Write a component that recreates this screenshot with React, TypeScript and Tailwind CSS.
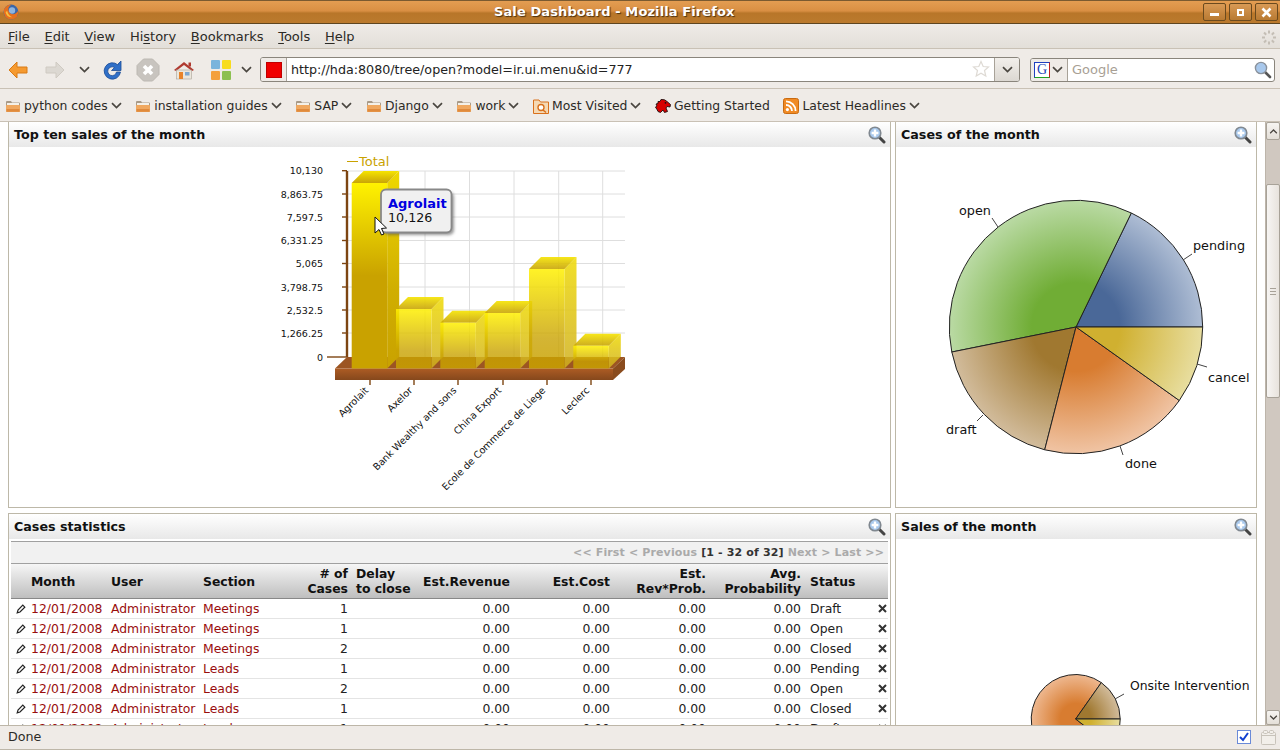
import React from "react";

const rows = [
  ["Meetings", "1", "Draft"],
  ["Meetings", "1", "Open"],
  ["Meetings", "2", "Closed"],
  ["Leads", "1", "Pending"],
  ["Leads", "2", "Open"],
  ["Leads", "1", "Closed"],
  ["Leads", "1", "Draft"],
];

const bookmarks = [
  { label: "python codes", icon: "folder", menu: true },
  { label: "installation guides", icon: "folder", menu: true },
  { label: "SAP", icon: "folder", menu: true },
  { label: "Django", icon: "folder", menu: true },
  { label: "work", icon: "folder", menu: true },
  { label: "Most Visited", icon: "visited", menu: true },
  { label: "Getting Started", icon: "moz", menu: false },
  { label: "Latest Headlines", icon: "rss", menu: true },
];

function Chevron({ className = "" }: { className?: string }) {
  return (
    <svg width="11" height="7" viewBox="0 0 11 7" className={className}>
      <path d="M1 1.2 L5.5 5.5 L10 1.2" fill="none" stroke="#4a4640" strokeWidth="1.7" />
    </svg>
  );
}

function FolderIcon() {
  return (
    <svg width="16" height="14" viewBox="0 0 16 14">
      <path d="M1 3 Q1 2 2 2 H6 L7 3.5 H14 Q15 3.5 15 4.5 V12 Q15 13 14 13 H2 Q1 13 1 12 Z" fill="#a89a88" />
      <rect x="2" y="4" width="12" height="3" fill="#f4f0e8" />
      <path d="M1 7 Q1 6 2 6 H14 Q15 6 15 7 V12 Q15 13 14 13 H2 Q1 13 1 12 Z" fill="#f0a860" />
      <path d="M1.5 10 H14.5 V12 Q14.5 12.7 14 12.7 H2 Q1.5 12.7 1.5 12 Z" fill="#e08a3c" />
    </svg>
  );
}

function BookmarkIcon({ type }: { type: string }) {
  if (type === "folder") return <FolderIcon />;
  if (type === "visited")
    return (
      <svg width="16" height="16" viewBox="0 0 16 16">
        <path d="M0.5 2 H6 L7.5 4 H15.5 V15.5 H0.5 Z" fill="#f5d9b4" stroke="#d9701c" />
        <circle cx="8" cy="9.5" r="3" fill="#fff" stroke="#d9701c" strokeWidth="1.4" />
        <path d="M10 12 L13 14.5" stroke="#d9701c" strokeWidth="1.6" />
      </svg>
    );
  if (type === "moz")
    return (
      <svg width="16" height="16" viewBox="0 0 16 16">
        <path d="M0.5 9 L2 8 L1 6 L3 5.5 L3 3.5 L5 3.5 L6 1.5 Q10 1 12 3.5 L15.5 6.5 L15 9 L12 8.5 L11 10 L12.5 13.5 L9.5 14.5 L8 12 L5.5 14.5 L3 13.5 L2 11.5 Z" fill="#d80000" stroke="#201010" strokeWidth="0.9" />
        <circle cx="10.5" cy="4.8" r="0.9" fill="#111" />
      </svg>
    );
  return (
    <svg width="16" height="16" viewBox="0 0 16 16">
      <rect x="0.5" y="0.5" width="15" height="15" rx="2" fill="#f08a24" stroke="#c96a10" />
      <circle cx="4.4" cy="11.6" r="1.6" fill="#fff" />
      <path d="M3 7 A6 6 0 0 1 9 13" fill="none" stroke="#fff" strokeWidth="1.8" />
      <path d="M3 3.4 A9.6 9.6 0 0 1 12.6 13" fill="none" stroke="#fff" strokeWidth="1.8" />
    </svg>
  );
}

function ZoomIcon() {
  return (
    <svg width="18" height="18" viewBox="0 0 18 18">
      <path d="M11 11 L16 16" stroke="#444" strokeWidth="3" strokeLinecap="round" />
      <circle cx="7" cy="7" r="5.8" fill="#a8c8ec" stroke="#808890" strokeWidth="1.6" />
      <path d="M7 3.6 V10.4 M3.6 7 H10.4" stroke="#fff" strokeWidth="2.4" />
    </svg>
  );
}

function WindowButton({ kind }: { kind: "min" | "max" | "close" }) {
  return (
    <div className="w-[23px] h-[18px] rounded-[2px] border border-[#6b4a1e] bg-gradient-to-b from-[#d99a55] to-[#b87a32] flex items-center justify-center">
      {kind === "min" && <div className="w-[9px] h-[3px] mt-[5px] bg-white" />}
      {kind === "max" && <div className="w-[7px] h-[7px] border-2 border-white" />}
      {kind === "close" && (
        <svg width="11" height="11" viewBox="0 0 11 11">
          <path d="M1.5 1.5 L9.5 9.5 M9.5 1.5 L1.5 9.5" stroke="#fff" strokeWidth="2.6" />
        </svg>
      )}
    </div>
  );
}

function TitleBar() {
  return (
    <div className="h-[24px] shrink-0 relative flex items-center justify-between border-t border-b border-t-[#7a5a30] border-b-[#5e4520] bg-[linear-gradient(#e39d52_0%,#d98f43_45%,#b87629_55%,#bb7a2e_100%)]">
      <svg width="16" height="16" viewBox="0 0 16 16" className="ml-[3px]">
        <circle cx="8" cy="8" r="7.4" fill="#3a66a8" />
        <circle cx="9" cy="6.5" r="3.2" fill="#8fb4de" />
        <path d="M0.8 6 Q3 0.6 8.5 0.8 Q5 2.6 5.4 6 Q6 10 10 10.3 Q13 10.3 15.3 6.5 Q15.6 15.4 8 15.4 Q0.6 15.4 0.8 6 Z" fill="#e8701c" />
        <path d="M2.6 8 Q3.6 13.4 9.4 13.2 Q5 11.4 4.2 7 Z" fill="#f8c040" />
      </svg>
      <span className="absolute left-[494px] top-[1px] text-[13px] font-bold tracking-[0.1px] text-white [text-shadow:1px_1px_1px_#4a3010]">
        Sale Dashboard - Mozilla Firefox
      </span>
      <div className="flex gap-[3px] mr-[2px]">
        <WindowButton kind="min" />
        <WindowButton kind="max" />
        <WindowButton kind="close" />
      </div>
    </div>
  );
}

function MenuBar() {
  const items: [string, string, string][] = [
    ["", "F", "ile"],
    ["", "E", "dit"],
    ["", "V", "iew"],
    ["Hi", "s", "tory"],
    ["", "B", "ookmarks"],
    ["", "T", "ools"],
    ["", "H", "elp"],
  ];
  return (
    <div className="h-[25px] shrink-0 flex items-center justify-between pl-[8px] pr-[4px] pt-[2px] bg-gradient-to-b from-[#efebe7] to-[#e3dfd9] border-b border-[#c9c1b5] text-[13px] text-[#2c2a26]">
      <div className="flex gap-[14.7px]">
        {items.map(([a, u, b]) => (
          <span key={a + u + b}>
            {a}
            <span className="underline underline-offset-2">{u}</span>
            {b}
          </span>
        ))}
      </div>
      <svg width="14" height="15" viewBox="0 0 14 15">
        {[0, 45, 90, 135, 180, 225, 270, 315].map((a) => (
          <rect key={a} x="6" y="0.5" width="2" height="3" fill="#c4beb5" transform={`rotate(${a} 7 7.5)`} />
        ))}
      </svg>
    </div>
  );
}

function NavBar() {
  return (
    <div className="h-[40px] shrink-0 flex items-center pt-[2px] bg-[#efebe7] border-b border-[#c9c1b5] relative">
      <svg width="20" height="18" viewBox="0 0 20 18" className="ml-[8px]">
        <path d="M9 1 L1 9 L9 17 V12 H19 V6 H9 Z" fill="#f59a30" stroke="#d97a14" strokeLinejoin="round" />
      </svg>
      <svg width="20" height="18" viewBox="0 0 20 18" className="ml-[17px]">
        <path d="M11 1 L19 9 L11 17 V12 H1 V6 H11 Z" fill="#dcd8d2" stroke="#cfcac2" strokeLinejoin="round" />
      </svg>
      <Chevron className="ml-[14px]" />
      <svg width="22" height="24" viewBox="0 0 22 24" className="ml-[11px]">
        <path d="M17 7 A8.2 8.2 0 1 0 19.5 14 H15.5 A4.4 4.4 0 1 1 13.5 9.5 L10.5 12.5 H20 V3 L17 6 Z" fill="#2f6fc8" stroke="#1d4c96" strokeWidth="0.8" />
      </svg>
      <svg width="24" height="24" viewBox="0 0 24 24" className="ml-[13px]">
        <path d="M7.5 1 H16.5 L23 7.5 V16.5 L16.5 23 H7.5 L1 16.5 V7.5 Z" fill="#c8c4bf" stroke="#bcb8b2" />
        <path d="M8 8 L16 16 M16 8 L8 16" stroke="#fff" strokeWidth="3.6" />
      </svg>
      <svg width="22" height="20" viewBox="0 0 22 20" className="ml-[13px]">
        <path d="M1 10 L11 2 L21 10 L19 11 L11 5 L3 11 Z" fill="#b03a30" />
        <rect x="15.5" y="2.5" width="2.5" height="4" fill="#b03a30" />
        <rect x="3.5" y="10" width="15" height="9" fill="#ebe6dc" stroke="#a8a298" strokeWidth="0.6" />
        <rect x="6" y="12" width="4" height="7" fill="#e8832a" />
        <rect x="12" y="12" width="4.5" height="3.5" fill="#7fa8d0" />
      </svg>
      <div className="ml-[16px] grid grid-cols-2 gap-[2px]">
        <div className="w-[9px] h-[9px] rounded-[1px] bg-[#7ab4dc]" />
        <div className="w-[9px] h-[9px] rounded-[1px] bg-[#f8dc1c]" />
        <div className="w-[9px] h-[9px] rounded-[1px] bg-[#f4a03c]" />
        <div className="w-[9px] h-[9px] rounded-[1px] bg-[#8cc050]" />
      </div>
      <Chevron className="ml-[10px]" />
      <div className="ml-[8px] w-[760px] h-[25px] flex rounded-[3px] border border-[#8a857c] bg-white overflow-hidden">
        <div className="w-[26px] flex items-center justify-center bg-[#efebe7] border-r border-[#a8a298]">
          <div className="w-[16px] h-[16px] bg-[#f00000] border border-[#c00000]" />
        </div>
        <span className="pl-[4px] flex-1 text-[12.7px] leading-[23px] text-[#222]">
          http://hda:8080/tree/open?model=ir.ui.menu&amp;id=777
        </span>
        <svg width="18" height="18" viewBox="0 0 18 18" className="mt-[2px] mr-[4px]">
          <path d="M9 1.5 L11.2 6.5 L16.5 7 L12.5 10.5 L13.8 16 L9 13.2 L4.2 16 L5.5 10.5 L1.5 7 L6.8 6.5 Z" fill="#fff" stroke="#dedad4" strokeWidth="1.2" />
        </svg>
        <div className="w-[25px] flex items-center justify-center bg-gradient-to-b from-[#f2efeb] to-[#dcd8d2] border-l border-[#a8a298]">
          <Chevron />
        </div>
      </div>
      <div className="ml-[10px] w-[245px] h-[24px] flex items-center rounded-[3px] border border-[#8a857c] bg-white overflow-hidden">
        <div className="w-[37px] h-full flex items-center bg-[#efebe7] border-r border-[#a8a298] pl-[3px] gap-[2px]">
          <div className="w-[16px] h-[16px] flex items-center justify-center border-t border-l border-t-[#2040c0] border-l-[#2040c0] border-r border-b border-r-[#c02020] border-b-[#20a020] bg-white text-[14px] leading-none text-[#1c3fb8] font-['Liberation_Serif',serif]">
            G
          </div>
          <Chevron />
        </div>
        <span className="pl-[4px] flex-1 text-[13px] text-[#a89f94]">Google</span>
        <svg width="18" height="18" viewBox="0 0 18 18" className="mr-[2px]">
          <path d="M11 11 L16 16" stroke="#555" strokeWidth="2.6" strokeLinecap="round" />
          <circle cx="7" cy="7" r="5.6" fill="#a8c8ec" stroke="#8a929c" strokeWidth="1.4" />
        </svg>
      </div>
    </div>
  );
}

function BookmarksBar() {
  return (
    <div className="h-[33px] shrink-0 flex items-center pl-[5px] pt-[2px] gap-[13.6px] bg-[#efebe7] border-b border-[#c9c1b5] text-[12.4px] text-[#2c2a26]">
      {bookmarks.map((b) => (
        <div key={b.label} className="flex items-center">
          <BookmarkIcon type={b.icon} />
          <span className="ml-[3px]">{b.label}</span>
          {b.menu && <Chevron className="ml-[3px]" />}
        </div>
      ))}
    </div>
  );
}

function PanelHeader({ title }: { title: string }) {
  return (
    <div className="h-[25px] flex items-center justify-between pl-[5px] pr-[4px] bg-gradient-to-b from-white to-[#e8e8e8]">
      <span className="pt-[1px] text-[12.7px] font-bold text-[#111]">{title}</span>
      <ZoomIcon />
    </div>
  );
}

const ticks = [
  ["10,130", 170.7],
  ["8,863.75", 194],
  ["7,597.5", 217],
  ["6,331.25", 240.5],
  ["5,065", 263.5],
  ["3,798.75", 287],
  ["2,532.5", 310],
  ["1,266.25", 333],
] as const;

const bars = [
  { x: 351.7, top: 183, solid: true },
  { x: 396, top: 309, solid: false },
  { x: 440.3, top: 322.7, solid: false },
  { x: 484.7, top: 313, solid: false },
  { x: 529, top: 269, solid: false },
  { x: 573.3, top: 345.7, solid: false },
];

const xLabels: [string, number][] = [
  ["Agrolait", 370],
  ["Axelor", 414],
  ["Bank Wealthy and sons", 458],
  ["China Export", 503],
  ["Ecole de Commerce de Liege", 547],
  ["Leclerc", 591],
];

function BarChart() {
  return (
    <svg width="881" height="360" viewBox="9 147 881 360" className="block">
      <defs>
        <linearGradient id="solidFront" x1="0" y1="0" x2="0" y2="1">
          <stop offset="0" stopColor="#fff200" />
          <stop offset="0.5" stopColor="#c9a200" />
          <stop offset="1" stopColor="#c9a200" />
        </linearGradient>
        <linearGradient id="solidSide" x1="0" y1="0" x2="0" y2="1">
          <stop offset="0" stopColor="#efd800" />
          <stop offset="0.6" stopColor="#d0ae00" />
          <stop offset="1" stopColor="#c9a200" />
        </linearGradient>
        <linearGradient id="softFront" x1="0" y1="0" x2="0" y2="1">
          <stop offset="0" stopColor="#fff000" stopOpacity="0.85" />
          <stop offset="0.7" stopColor="#c9a200" stopOpacity="0.8" />
          <stop offset="1" stopColor="#c9a200" stopOpacity="0.85" />
        </linearGradient>
        <linearGradient id="softSide" x1="0" y1="0" x2="0" y2="1">
          <stop offset="0" stopColor="#f0dc10" stopOpacity="0.9" />
          <stop offset="1" stopColor="#d0b020" stopOpacity="0.85" />
        </linearGradient>
        <linearGradient id="barTop" x1="0" y1="0" x2="0" y2="1">
          <stop offset="0" stopColor="#f6e400" />
          <stop offset="1" stopColor="#c8a408" />
        </linearGradient>
        <linearGradient id="plinth" x1="0" y1="0" x2="0" y2="1">
          <stop offset="0" stopColor="#ad5c24" />
          <stop offset="1" stopColor="#85481c" />
        </linearGradient>
      </defs>

      {[171, 194, 217, 240.5, 263.5, 287, 310, 333].map((y) => (
        <line key={y} x1="347" x2="625" y1={y} y2={y} stroke="#dedede" />
      ))}
      {[425, 469.5, 514, 558.7, 602.7].map((x) => (
        <line key={x} x1={x} x2={x} y1="171" y2="357" stroke="#dedede" />
      ))}

      <path d="M347 171 V357" stroke="#7d4512" strokeWidth="2.4" />
      {ticks.map(([, y]) => (
        <line key={y} x1="342" x2="347" y1={y} y2={y} stroke="#7d4512" strokeWidth="1.4" />
      ))}
      <line x1="327" x2="347" y1="357" y2="357" stroke="#7d4512" strokeWidth="1.4" />
      {ticks.map(([label, y]) => (
        <text key={label} x="323" y={y + 3.5} textAnchor="end" fontSize="9.5" fill="#111">
          {label}
        </text>
      ))}
      <text x="323" y="360.5" textAnchor="end" fontSize="9.5" fill="#111">
        0
      </text>

      <path d="M335 368.5 L347 357 H625 L613 368.5 Z" fill="#9c5522" />
      <rect x="335" y="368.5" width="278" height="11.5" fill="url(#plinth)" />
      <path d="M613 368.5 L625 357 V369 L613 380 Z" fill="#8a4c1e" />

      {bars.map((b) => (
        <g key={b.x}>
          <path
            d={`M${b.x + 35.5} ${b.top} l12 -12 V356.5 l-12 12 Z`}
            fill={b.solid ? "url(#solidSide)" : "url(#softSide)"}
          />
          <path d={`M${b.x} ${b.top} l12 -12 h35.5 l-12 12 Z`} fill="url(#barTop)" fillOpacity={b.solid ? 1 : 0.9} />
          <rect x={b.x} y={b.top} width="35.5" height={368.5 - b.top} fill={b.solid ? "url(#solidFront)" : "url(#softFront)"} />
        </g>
      ))}

      {xLabels.map(([label, x]) => (
        <g key={label}>
          <line x1={x} x2={x} y1="380" y2="385" stroke="#7d4512" strokeWidth="1.4" />
          <text x={x - 1} y="391" textAnchor="end" fontSize="9.7" fill="#111" transform={`rotate(-45 ${x - 1} 391)`}>
            {label}
          </text>
        </g>
      ))}

      <line x1="347" x2="358" y1="161.5" y2="161.5" stroke="#c9a200" />
      <text x="359" y="166" fontSize="13" fill="#c9a200">
        Total
      </text>

      <rect x="384" y="192" width="70" height="43" rx="5" fill="#555" opacity="0.6" className="blur-[1.5px]" />
      <rect x="381" y="189.5" width="70.5" height="43" rx="5" fill="#f0f0f0" stroke="#888" strokeWidth="1.8" />
      <text x="388" y="208" fontSize="13" fontWeight="bold" fill="#0000e0">
        Agrolait
      </text>
      <text x="388" y="222" fontSize="12.7" fill="#111">
        10,126
      </text>
      <path d="M375 217 V233 L379 229.5 L381.5 235 L384 234 L381.5 228.5 L386.5 228 Z" fill="#fff" stroke="#111" strokeWidth="1" />
    </svg>
  );
}

type Slice = { id: string; d: string; dark: string; light: string };

function pieSlices(cx: number, cy: number, r: number, slices: { id: string; from: [number, number]; to: [number, number]; dark: string; light: string; large?: boolean }[]): Slice[] {
  return slices.map((s) => ({
    id: s.id,
    dark: s.dark,
    light: s.light,
    d: `M${cx} ${cy} L${s.from[0]} ${s.from[1]} A${r} ${r} 0 ${s.large ? 1 : 0} 0 ${s.to[0]} ${s.to[1]} Z`,
  }));
}

function Pie({ cx, cy, r, slices }: { cx: number; cy: number; r: number; slices: Slice[] }) {
  return (
    <g>
      <defs>
        {slices.map((s) => (
          <radialGradient key={s.id} id={s.id} gradientUnits="userSpaceOnUse" cx={cx} cy={cy} r={r}>
            <stop offset="0" stopColor={s.dark} />
            <stop offset="0.35" stopColor={s.dark} />
            <stop offset="1" stopColor={s.light} />
          </radialGradient>
        ))}
      </defs>
      {slices.map((s) => (
        <path key={s.id} d={s.d} fill={`url(#${s.id})`} stroke="#222" strokeWidth="1" strokeLinejoin="round" />
      ))}
    </g>
  );
}

function CasesPie() {
  const slices = pieSlices(1076, 327, 126.7, [
    { id: "pPending", from: [1202.7, 327], to: [1131.3, 213], dark: "#4a6898", light: "#aebdd4" },
    { id: "pOpen", from: [1131.3, 213], to: [951.8, 352], dark: "#70ad35", light: "#badaa4" },
    { id: "pDraft", from: [951.8, 352], to: [1044.7, 449.8], dark: "#a07830", light: "#d2bc9c" },
    { id: "pDone", from: [1044.7, 449.8], to: [1179.3, 400.5], dark: "#d87c30", light: "#f0c4a4" },
    { id: "pCancel", from: [1179.3, 400.5], to: [1202.7, 327], dark: "#d0b030", light: "#e8dea0" },
  ]);
  return (
    <svg width="360" height="360" viewBox="896 147 360 360" className="block">
      <Pie cx={1076} cy={327} r={126.7} slices={slices} />
      <g stroke="#444" fill="none">
        <path d="M992 218 L998 227" />
        <path d="M1192 254 L1183 260" />
        <path d="M1197 364 L1207 367" />
        <path d="M1120 446 L1123 455" />
        <path d="M983 415 L977 421" />
      </g>
      <g fontSize="12.8" fill="#111">
        <text x="959" y="215">open</text>
        <text x="1193" y="250">pending</text>
        <text x="1208" y="382">cancel</text>
        <text x="1125" y="468">done</text>
        <text x="946" y="434">draft</text>
      </g>
    </svg>
  );
}

function SalesPie() {
  const slices = pieSlices(1075.7, 719, 44.5, [
    { id: "sOrange", from: [1101.3, 682.6], to: [1110.8, 746.4], dark: "#d87c30", light: "#eeb890", large: true },
    { id: "sTan", from: [1120.2, 719], to: [1101.3, 682.6], dark: "#a07830", light: "#d2bc9c" },
    { id: "sYellow", from: [1110.8, 746.4], to: [1120.2, 719], dark: "#d0b030", light: "#e8dea0" },
  ]);
  return (
    <svg width="360" height="240" viewBox="896 539 360 240" className="block">
      <Pie cx={1075.7} cy={719} r={44.5} slices={slices} />
      <path d="M1115 699 L1124 694" stroke="#444" />
      <text x="1130" y="690" fontSize="12.4" fill="#111">
        Onsite Intervention
      </text>
    </svg>
  );
}

function CasesTable() {
  return (
    <div className="mx-[2px] mt-[2px] border-t border-[#a0a0a0]">
      <div className="h-[22px] flex items-center justify-end pr-[4px] pt-[2px] bg-[#f1f1f1] text-[11px] font-bold tracking-[0.14px] text-[#aaa] border-b border-[#a0a0a0]">
        &lt;&lt; First &lt; Previous&nbsp;<span className="text-[#333]">[1 - 32 of 32]</span>&nbsp;Next &gt; Last &gt;&gt;
      </div>
      <table className="w-[877px] table-fixed border-separate border-spacing-0 text-[12.4px] leading-[15px]">
        <colgroup>
          <col className="w-[20px]" />
          <col className="w-[80px]" />
          <col className="w-[92px]" />
          <col className="w-[90px]" />
          <col className="w-[59px]" />
          <col className="w-[62px]" />
          <col className="w-[100px]" />
          <col className="w-[100px]" />
          <col className="w-[96px]" />
          <col className="w-[96px]" />
          <col className="w-[70px]" />
          <col className="w-[12px]" />
        </colgroup>
        <thead>
          <tr className="h-[35px] bg-gradient-to-b from-[#f6f6f6] to-[#bdbdbd] text-[#111] [&>th]:border-b [&>th]:border-[#888] [&>th]:font-bold">
            <th />
            <th className="text-left">Month</th>
            <th className="text-left">User</th>
            <th className="text-left">Section</th>
            <th className="text-right pr-[4px]">
              # of<br />Cases
            </th>
            <th className="text-left pl-[4px]">
              Delay<br />to close
            </th>
            <th className="text-right pr-[4px]">Est.Revenue</th>
            <th className="text-right pr-[4px]">Est.Cost</th>
            <th className="text-right pr-[4px]">
              Est.<br />Rev*Prob.
            </th>
            <th className="text-right pr-[5px]">
              Avg.<br />Probability
            </th>
            <th className="text-left pl-[4px]">Status</th>
            <th />
          </tr>
        </thead>
        <tbody>
          {rows.map(([section, count, status], i) => (
            <tr key={i} className="h-[20px] text-[#222] [&>td]:border-b [&>td]:border-[#e4e4e4]">
              <td className="pl-[5px]">
                <svg width="10" height="10" viewBox="0 0 10 10" className="block">
                  <path d="M1.2 8.8 L2 6 L6.8 1.2 L8.8 3.2 L4 8 Z" fill="#fff" stroke="#222" strokeWidth="1.2" />
                </svg>
              </td>
              <td className="text-[#990d0d]">12/01/2008</td>
              <td className="text-[#990d0d]">Administrator</td>
              <td className="text-[#990d0d]">{section}</td>
              <td className="text-right pr-[4px]">{count}</td>
              <td />
              <td className="text-right pr-[4px]">0.00</td>
              <td className="text-right pr-[4px]">0.00</td>
              <td className="text-right pr-[4px]">0.00</td>
              <td className="text-right pr-[5px]">0.00</td>
              <td className="pl-[4px]">{status}</td>
              <td className="pl-[2px]">
                <svg width="9" height="9" viewBox="0 0 9 9" className="block">
                  <path d="M1 1 L8 8 M8 1 L1 8" stroke="#333" strokeWidth="2" />
                </svg>
              </td>
            </tr>
          ))}
        </tbody>
      </table>
    </div>
  );
}

function Scrollbar() {
  return (
    <div className="w-[15px] shrink-0 ml-[8px] flex flex-col bg-[#d0c8c0] border-l border-[#bdb5aa]">
      <div className="h-[18px] flex items-center justify-center rounded-[2px] border border-[#a8a298] bg-gradient-to-b from-[#f6f4f1] to-[#e4dfd8]">
        <Chevron className="rotate-180 scale-75" />
      </div>
      <div className="mt-[44px] h-[214px] flex items-center justify-center rounded-[2px] border border-[#a8a298] bg-gradient-to-r from-[#f7f5f3] to-[#e8e3dd]">
        <div className="w-[6px] h-[7px] border-t border-b border-[#a8a298] flex items-center">
          <div className="w-full h-px bg-[#a8a298]" />
        </div>
      </div>
      <div className="flex-1" />
      <div className="h-[15px] flex items-center justify-center rounded-[2px] border border-[#a8a298] bg-gradient-to-b from-[#f6f4f1] to-[#e4dfd8]">
        <Chevron className="scale-75" />
      </div>
    </div>
  );
}

function StatusBar() {
  return (
    <div className="h-[25px] shrink-0 flex items-center justify-between pl-[8px] pr-[4px] pb-[1px] bg-[#efebe7] border-t border-b border-[#bdb6a8] text-[12.7px] text-[#2c2a26]">
      <span>Done</span>
      <div className="flex items-center gap-[10px]">
        <svg width="14" height="14" viewBox="0 0 14 14">
          <rect x="0.5" y="0.5" width="13" height="13" fill="#fff" stroke="#6a8ad8" />
          <path d="M3 7 L6 10 L11 3" fill="none" stroke="#1040d0" strokeWidth="2" />
        </svg>
        <svg width="15" height="15" viewBox="0 0 15 15">
          <rect x="0.5" y="2.5" width="14" height="12" rx="1" fill="#f2efea" stroke="#c8c3ba" />
          <rect x="2.5" y="0.5" width="4" height="3" rx="1" fill="#f2efea" stroke="#c8c3ba" />
          <rect x="8.5" y="0.5" width="4" height="3" rx="1" fill="#f2efea" stroke="#c8c3ba" />
          <path d="M1 5.5 H14" stroke="#c8c3ba" />
        </svg>
      </div>
    </div>
  );
}

export default function App() {
  return (
    <div className="w-[1280px] h-[750px] overflow-hidden flex flex-col bg-white font-['DejaVu_Sans',sans-serif]">
      <TitleBar />
      <MenuBar />
      <NavBar />
      <BookmarksBar />
      <div className="flex-1 min-h-0 flex overflow-hidden bg-white">
        <div className="ml-[8px] flex flex-col gap-[5px]">
          <div className="flex gap-[4px] shrink-0">
            <div className="w-[883px] h-[386px] border-l border-r border-b border-[#bdb8a8]">
              <PanelHeader title="Top ten sales of the month" />
              <BarChart />
            </div>
            <div className="w-[362px] h-[386px] border-l border-r border-b border-[#bdb8a8]">
              <PanelHeader title="Cases of the month" />
              <CasesPie />
            </div>
          </div>
          <div className="flex gap-[4px] shrink-0">
            <div className="w-[883px] h-[300px] border border-[#bdb8a8]">
              <PanelHeader title="Cases statistics" />
              <CasesTable />
            </div>
            <div className="w-[362px] h-[300px] border border-[#bdb8a8]">
              <PanelHeader title="Sales of the month" />
              <SalesPie />
            </div>
          </div>
        </div>
        <Scrollbar />
      </div>
      <StatusBar />
    </div>
  );
}
